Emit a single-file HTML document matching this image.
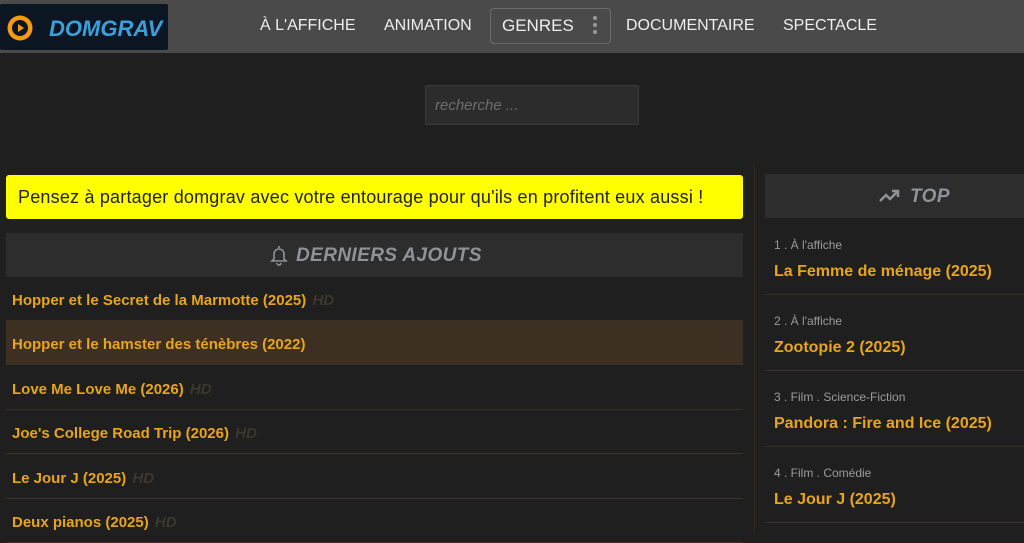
<!DOCTYPE html>
<html><head><meta charset="utf-8"><style>
*{margin:0;padding:0;box-sizing:border-box}
body{width:1024px;height:534px;overflow:hidden;background:#1f1f1f;font-family:"Liberation Sans",Arial,sans-serif;position:relative}
.hdr{position:absolute;left:0;top:0;width:1024px;height:53px;background:#4a4a4a}
.logo{position:absolute;left:0;top:4px;width:168px;height:46px;background:#0c1622;border-radius:2px}
.logo .c{position:absolute;left:7px;top:11px;width:26px;height:26px}
.logo .t{position:absolute;left:49px;top:12px;font-weight:bold;font-style:italic;font-size:22px;color:#3aa0dc}
.nav{position:absolute;top:17px;font-size:16px;color:#eee}
.genres{position:absolute;left:490px;top:8px;width:121px;height:36px;border:1px solid #6a6a6a;border-radius:4px}
.search{position:absolute;left:425px;top:85px;width:214px;height:40px;background:#2c2c2c;border:1px solid #3a3a3a;border-radius:2px;font-style:italic;font-size:15px;color:#6e6e6e;padding:11px 9px}
.alert{position:absolute;left:6px;top:175px;width:737px;height:44px;background:#ffff00;border-radius:3px;font-size:18px;letter-spacing:.2px;color:#222;padding:12px 12px}
.bar{position:absolute;background:#2d2d2d;font-weight:bold;font-style:italic;color:#8f9297;font-size:19px;letter-spacing:.4px}
.vsep{position:absolute;left:754px;top:165px;width:1px;height:369px;background:#2f2a22}
.row{position:absolute;left:6px;width:737px;height:44px;border-bottom:1px solid #3a3225;font-weight:bold;font-size:15px;color:#e8a51c;padding:15px 6px 0}
.row i{color:#3e372d;font-weight:bold;margin-left:2px}
.top{position:absolute;left:765px;width:259px;height:70px;border-bottom:1px solid #3a3225;padding:13px 9px}
.top .s{font-size:12px;color:#9b9b9b}
.top .n{font-size:16px;font-weight:bold;color:#e8a51c;margin-top:11px}
</style></head><body>
<div class="hdr"></div>
<div class="logo"><svg class="c" viewBox="0 0 26 26"><circle cx="13" cy="13" r="12.5" fill="#f39c12"/><circle cx="13" cy="13" r="8" fill="#0c1622"/><path d="M11 9v8l6-4z" fill="#f39c12"/></svg><div class="t">DOMGRAV</div></div>
<div class="nav" style="left:260px">À L'AFFICHE</div>
<div class="nav" style="left:384px">ANIMATION</div>
<div class="genres"></div>
<div class="nav" style="left:502px;font-size:17px;top:16px">GENRES</div>
<svg style="position:absolute;left:592px;top:15px" width="6" height="22"><circle cx="3" cy="3" r="2" fill="#999"/><circle cx="3" cy="10" r="2" fill="#999"/><circle cx="3" cy="17" r="2" fill="#999"/></svg>
<div class="nav" style="left:626px">DOCUMENTAIRE</div>
<div class="nav" style="left:783px">SPECTACLE</div>
<div class="search">recherche ...</div>
<div class="alert">Pensez à partager domgrav avec votre entourage pour qu'ils en profitent eux aussi !</div>
<div class="bar" style="left:6px;top:233px;width:737px;height:44px"><svg style="position:absolute;left:264px;top:11px" width="18" height="22" viewBox="0 0 18 22"><path d="M9 2v2M4 15V10a5 5 0 0 1 10 0v5l2 2H2z M7 19a2 2 0 0 0 4 0" fill="none" stroke="#8f9297" stroke-width="1.6"/></svg><span style="position:absolute;left:290px;top:12px">DERNIERS AJOUTS</span></div>
<div class="vsep"></div>
<div class="row" style="top:277px">Hopper et le Secret de la Marmotte (2025) <i>HD</i></div>
<div class="row" style="top:321px;background:#3d3023">Hopper et le hamster des ténèbres (2022)</div>
<div class="row" style="top:366px">Love Me Love Me (2026) <i>HD</i></div>
<div class="row" style="top:410px">Joe's College Road Trip (2026) <i>HD</i></div>
<div class="row" style="top:455px">Le Jour J (2025) <i>HD</i></div>
<div class="row" style="top:499px">Deux pianos (2025) <i>HD</i></div>
<div class="bar" style="left:765px;top:174px;width:259px;height:44px"><svg style="position:absolute;left:114px;top:15px" width="22" height="14" viewBox="0 0 22 14"><path d="M1 12l6-6 4 4 8-8M13 2h6v6" fill="none" stroke="#8f9297" stroke-width="2.5"/></svg><span style="position:absolute;left:145px;top:12px">TOP</span></div>
<div class="top" style="top:225px"><div class="s">1 . À l'affiche</div><div class="n">La Femme de ménage (2025)</div></div>
<div class="top" style="top:301px"><div class="s">2 . À l'affiche</div><div class="n">Zootopie 2 (2025)</div></div>
<div class="top" style="top:377px"><div class="s">3 . Film . Science-Fiction</div><div class="n">Pandora : Fire and Ice (2025)</div></div>
<div class="top" style="top:453px"><div class="s">4 . Film . Comédie</div><div class="n">Le Jour J (2025)</div></div>
</body></html>
